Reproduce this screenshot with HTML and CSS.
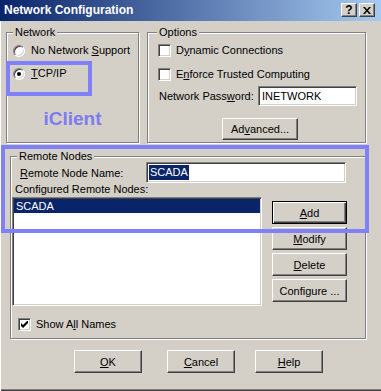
FILE: index.html
```html
<!DOCTYPE html>
<html lang="en">
<head>
  <meta charset="UTF-8" />
  <title>Network Configuration</title>
  <link rel="stylesheet" href="styles.css">
</head>
<body>
  <div class="window">
    <div class="titlebar">
      <span class="title">Network Configuration</span>
      <span class="title-btn help">?</span>
      <span class="title-btn close">
        <svg width="8" height="7" viewBox="0 0 8 7"><path d="M0 0h2l2 2.5L6 0h2L5 3.5 8 7H6L4 4.5 2 7H0l3-3.5z" fill="#000"/></svg>
      </span>
    </div>

    <div class="top-row">
      <div class="group network">
        <span class="legend">Network</span>
        <label class="opt first"><span class="radio"></span><span>No Network <u>S</u>upport</span></label>
        <label class="opt second"><span class="radio on"></span><span><u>T</u>CP/IP</span></label>
        <div class="brand">iClient</div>
      </div>

      <div class="group options">
        <span class="legend opt-legend">Options</span>
        <label class="opt check first"><span class="box"></span><span>D<u>y</u>namic Connections</span></label>
        <label class="opt check second"><span class="box"></span><span>E<u>n</u>force Trusted Computing</span></label>
        <div class="pw-row">
          <span class="pw-label">Network Pass<u>w</u>ord:</span>
          <span class="field pw">INETWORK</span>
        </div>
        <button class="btn advanced">Ad<u>v</u>anced...</button>
      </div>
    </div>

    <div class="group remote">
      <span class="legend">Remote Nodes</span>
      <div class="name-row">
        <span class="name-label"><u>R</u>emote Node Name:</span>
        <span class="field name"><span class="sel">SCADA</span></span>
      </div>
      <div class="list-label">Configured Remote Nodes:</div>
      <div class="list-area">
        <div class="listbox">
          <div class="row selected">SCADA</div>
        </div>
        <div class="side-btns">
          <button class="btn default"><u>A</u>dd</button>
          <button class="btn"><u>M</u>odify</button>
          <button class="btn"><u>D</u>elete</button>
          <button class="btn">Confi<u>g</u>ure ...</button>
        </div>
      </div>
      <label class="opt check show-all">
        <span class="box">
          <svg width="7" height="7" viewBox="0 0 7 7"><path d="M0 2v3l2 2 5-5V-1L2 4z" fill="#000"/></svg>
        </span><span>Show A<u>l</u>l Names</span>
      </label>
    </div>

    <div class="bottom-btns">
      <button class="btn ok"><u>O</u>K</button>
      <button class="btn cancel"><u>C</u>ancel</button>
      <button class="btn help-btn"><u>H</u>elp</button>
    </div>

    <div class="mark mark-tcp"></div>
    <div class="mark mark-remote"></div>
  </div>
</body>
</html>
```

FILE: styles.css
```css
body {
  margin: 0;
  font-family: "Liberation Sans", Arial, sans-serif;
  font-size: 11px;
  color: #000;
  background: #d4d0c8;
}
u {
  text-decoration: underline;
  text-underline-offset: 1px;
}
.window {
  position: relative;
  width: 381px;
  height: 391px;
  background: #d4d0c8;
  box-sizing: border-box;
  box-shadow: inset 1px 0 0 #fff, inset 0 -1px 0 #404040, inset 0 -2px 0 #808080;
  overflow: hidden;
}
.titlebar {
  height: 21px;
  display: flex;
  align-items: center;
  padding: 0 6px 1px 4px;
  box-sizing: border-box;
  background: linear-gradient(to right, #0a246a, #a6caf0);
}
.title {
  flex: 1;
  color: #fff;
  font-weight: bold;
  font-size: 12px;
}
.title-btn {
  width: 16px;
  height: 14px;
  box-sizing: border-box;
  background: #d4d0c8;
  border: 1px solid;
  border-color: #fff #404040 #404040 #fff;
  box-shadow: inset -1px -1px 0 #808080;
  display: flex;
  align-items: center;
  justify-content: center;
  font-weight: bold;
  font-size: 12px;
  line-height: 12px;
}
.title-btn.close {
  margin-left: 2px;
}

/* group boxes */
.group {
  border: 1px solid #808080;
  box-shadow: inset 1px 1px 0 #fff, 1px 1px 0 #fff;
  box-sizing: border-box;
}
.legend {
  display: block;
  width: fit-content;
  margin: -7px 0 0 6px;
  padding: 0 2px;
  line-height: 13px;
  background: #d4d0c8;
}
.top-row {
  display: flex;
  gap: 8px;
  margin: 11px 0 0 6px;
}
.network {
  width: 133px;
  height: 111px;
}
.options {
  width: 219px;
  height: 111px;
}
.opt-legend {
  margin-left: 9px;
}

/* radios and checks */
.opt {
  display: flex;
  align-items: center;
  height: 13px;
  line-height: 13px;
}
.network .opt {
  padding-left: 6px;
}
.network .first {
  margin-top: 5px;
}
.network .second {
  margin-top: 10px;
}
.radio {
  width: 12px;
  height: 12px;
  margin-right: 6px;
  border-radius: 50%;
  box-sizing: border-box;
  background: #fff;
  border: 1px solid;
  border-color: #808080 #fff #fff #808080;
  box-shadow: inset 1px 1px 0 #404040, inset -1px -1px 0 #d4d0c8;
  display: flex;
  align-items: center;
  justify-content: center;
}
.radio.on::after {
  content: "";
  width: 4px;
  height: 4px;
  border-radius: 50%;
  background: #000;
}
.brand {
  margin-top: 28px;
  text-align: center;
  font-weight: bold;
  font-size: 19px;
  line-height: 22px;
  color: #7c7cf0;
}
.check .box {
  width: 13px;
  height: 13px;
  margin-right: 5px;
  box-sizing: border-box;
  background: #fff;
  border: 1px solid;
  border-color: #808080 #fff #fff #808080;
  box-shadow: inset 1px 1px 0 #404040, inset -1px -1px 0 #d4d0c8;
  display: flex;
  align-items: center;
  justify-content: center;
}
.options .opt {
  padding-left: 10px;
}
.options .first {
  margin-top: 5px;
}
.options .second {
  margin-top: 11px;
}

/* fields */
.field {
  display: flex;
  align-items: center;
  box-sizing: border-box;
  background: #fff;
  border: 1px solid;
  border-color: #808080 #fff #fff #808080;
  box-shadow: inset 1px 1px 0 #404040, inset -1px -1px 0 #d4d0c8;
  padding: 0 3px;
}
.pw-row {
  display: flex;
  align-items: center;
  margin-top: 5px;
  padding-left: 11px;
}
.pw-label {
  width: 99px;
}
.pw {
  width: 99px;
  height: 20px;
}

/* buttons */
.btn {
  display: block;
  box-sizing: border-box;
  font: inherit;
  padding: 0;
  color: #000;
  background: #d4d0c8;
  border: 1px solid;
  border-color: #fff #404040 #404040 #fff;
  box-shadow: inset -1px -1px 0 #808080;
}
.btn.default {
  border-color: #000;
  box-shadow: inset 1px 1px 0 #fff, inset -1px -1px 0 #404040, inset -2px -2px 0 #808080;
}
.advanced {
  width: 76px;
  height: 22px;
  margin: 12px 0 0 74px;
}

/* remote nodes */
.remote {
  width: 356px;
  height: 183px;
  margin: 13px 0 0 10px;
}
.name-row {
  display: flex;
  align-items: center;
  margin-top: -1px;
  padding-left: 9px;
}
.name-label {
  width: 126px;
}
.name {
  width: 200px;
  height: 21px;
  padding-left: 2px;
}
.sel {
  background: #0a246a;
  color: #fff;
  padding: 1px 1px;
  line-height: 13px;
}
.list-label {
  line-height: 13px;
  padding-left: 4px;
}
.list-area {
  display: flex;
  gap: 10px;
  margin: 1px 0 0 1px;
}
.listbox {
  width: 250px;
  height: 109px;
  box-sizing: border-box;
  background: #fff;
  border: 1px solid;
  border-color: #808080 #fff #fff #808080;
  box-shadow: inset 1px 1px 0 #404040, inset -1px -1px 0 #d4d0c8;
  padding: 1px;
}
.row {
  height: 14px;
  line-height: 14px;
  padding-left: 2px;
}
.row.selected {
  background: #0a246a;
  color: #fff;
}
.side-btns {
  display: flex;
  flex-direction: column;
  gap: 3px;
  margin-top: 4px;
}
.side-btns .btn {
  width: 75px;
  height: 23px;
}
.show-all {
  margin-top: 12px;
  padding-left: 7px;
}
.show-all .box {
  margin-right: 5px;
}

.bottom-btns {
  display: flex;
  margin: 11px 0 0 74px;
}
.bottom-btns .btn {
  width: 68px;
  height: 23px;
}
.cancel {
  margin-left: 25px;
}
.help-btn {
  margin-left: 20px;
}

/* highlight marks drawn over the dialog */
.mark {
  position: absolute;
  border: 4px solid #8080f8;
  box-sizing: border-box;
}
.mark-tcp {
  left: 6px;
  top: 61px;
  width: 86px;
  height: 35px;
}
.mark-remote {
  left: 1px;
  top: 145px;
  width: 368px;
  height: 88px;
}
```
